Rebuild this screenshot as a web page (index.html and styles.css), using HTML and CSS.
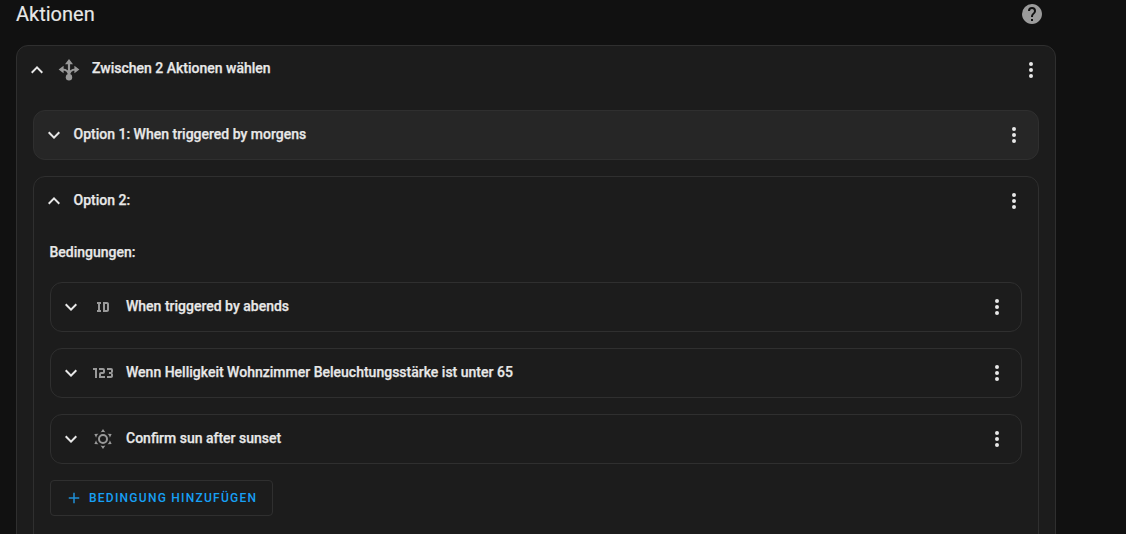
FILE: index.html
```html
<!DOCTYPE html>
<html lang="de">
<head>
<meta charset="utf-8">
<title>Aktionen</title>
<link rel="stylesheet" href="styles.css">
</head>
<body>
<main class="page">
  <header class="title-row">
    <h1 class="title">Aktionen</h1>
    <svg class="icon help" viewBox="0 0 24 24"><path d="M15.07,11.25L14.17,12.17C13.45,12.89 13,13.5 13,15H11V14.5C11,13.39 11.45,12.39 12.17,11.67L13.41,10.41C13.78,10.05 14,9.55 14,9C14,7.89 13.1,7 12,7A2,2 0 0,0 10,9H8A4,4 0 0,1 12,5A4,4 0 0,1 16,9C16,9.88 15.64,10.67 15.07,11.25M13,19H11V17H13M12,2A10,10 0 0,0 2,12C2,17.5 6.47,22 12,22C17.5,22 22,17.5 22,12C22,6.47 17.5,2 12,2Z"/></svg>
  </header>

  <section class="card">
    <div class="row">
      <svg class="icon chev" viewBox="0 0 24 24"><path d="M7.41,15.41L12,10.83L16.59,15.41L18,14L12,8L6,14L7.41,15.41Z"/></svg>
      <svg class="icon type choose" viewBox="0 0 24 24"><path class="choose-lines" d="M12 19V5M12 18C12 14 9.5 11.5 5 11.5M12 18C12 14 14.5 11.5 19 11.5"/><path d="M12 1L16 6.2H8ZM1.6 11.5L6.6 7.8V15.2ZM22.4 11.5L17.4 7.8V15.2Z"/><circle cx="12" cy="19.2" r="3.2"/></svg>
      <span class="label label-top">Zwischen 2 Aktionen wählen</span>
      <svg class="icon dots" viewBox="0 0 24 24"><path d="M12,16A2,2 0 0,1 14,18A2,2 0 0,1 12,20A2,2 0 0,1 10,18A2,2 0 0,1 12,16M12,10A2,2 0 0,1 14,12A2,2 0 0,1 12,14A2,2 0 0,1 10,12A2,2 0 0,1 12,10M12,4A2,2 0 0,1 14,6A2,2 0 0,1 12,8A2,2 0 0,1 10,6A2,2 0 0,1 12,4Z"/></svg>
    </div>

    <div class="card-body">
      <div class="card collapsed-option">
        <div class="row">
          <svg class="icon chev chev-plain" viewBox="0 0 24 24"><path d="M7.41,8.58L12,13.17L16.59,8.58L18,10L12,16L6,10L7.41,8.58Z"/></svg>
          <span class="label">Option 1: When triggered by morgens</span>
          <svg class="icon dots" viewBox="0 0 24 24"><path d="M12,16A2,2 0 0,1 14,18A2,2 0 0,1 12,20A2,2 0 0,1 10,18A2,2 0 0,1 12,16M12,10A2,2 0 0,1 14,12A2,2 0 0,1 12,14A2,2 0 0,1 10,12A2,2 0 0,1 12,10M12,4A2,2 0 0,1 14,6A2,2 0 0,1 12,8A2,2 0 0,1 10,6A2,2 0 0,1 12,4Z"/></svg>
        </div>
      </div>

      <div class="card">
        <div class="row">
          <svg class="icon chev chev-plain" viewBox="0 0 24 24"><path d="M7.41,15.41L12,10.83L16.59,15.41L18,14L12,8L6,14L7.41,15.41Z"/></svg>
          <span class="label">Option 2:</span>
          <svg class="icon dots" viewBox="0 0 24 24"><path d="M12,16A2,2 0 0,1 14,18A2,2 0 0,1 12,20A2,2 0 0,1 10,18A2,2 0 0,1 12,16M12,10A2,2 0 0,1 14,12A2,2 0 0,1 12,14A2,2 0 0,1 10,12A2,2 0 0,1 12,10M12,4A2,2 0 0,1 14,6A2,2 0 0,1 12,8A2,2 0 0,1 10,6A2,2 0 0,1 12,4Z"/></svg>
        </div>
        <div class="option-body">
          <h2 class="section-title">Bedingungen:</h2>

          <div class="card">
            <div class="row">
              <svg class="icon chev" viewBox="0 0 24 24"><path d="M7.41,8.58L12,13.17L16.59,8.58L18,10L12,16L6,10L7.41,8.58Z"/></svg>
              <svg class="icon type" viewBox="0 0 24 24"><path d="M10 7V9H9V15H10V17H6V15H7V9H6V7H10M16 7C17.11 7 18 7.9 18 9V15C18 16.11 17.11 17 16 17H12V7M16 9H14V15H16V9Z"/></svg>
              <span class="label">When triggered by abends</span>
              <svg class="icon dots" viewBox="0 0 24 24"><path d="M12,16A2,2 0 0,1 14,18A2,2 0 0,1 12,20A2,2 0 0,1 10,18A2,2 0 0,1 12,16M12,10A2,2 0 0,1 14,12A2,2 0 0,1 12,14A2,2 0 0,1 10,12A2,2 0 0,1 12,10M12,4A2,2 0 0,1 14,6A2,2 0 0,1 12,8A2,2 0 0,1 10,6A2,2 0 0,1 12,4Z"/></svg>
            </div>
          </div>

          <div class="card">
            <div class="row">
              <svg class="icon chev" viewBox="0 0 24 24"><path d="M7.41,8.58L12,13.17L16.59,8.58L18,10L12,16L6,10L7.41,8.58Z"/></svg>
              <svg class="icon type" viewBox="0 0 24 24"><path d="M4,17V9H2V7H6V17H4M22,15C22,16.11 21.1,17 20,17H16V15H20V13H18V11H20V9H16V7H20A2,2 0 0,1 22,9V10.5A1.5,1.5 0 0,1 20.5,12A1.5,1.5 0 0,1 22,13.5V15M14,15V17H8V13C8,11.89 8.9,11 10,11H12V9H8V7H12A2,2 0 0,1 14,9V11C14,12.11 13.1,13 12,13H10V15H14Z"/></svg>
              <span class="label">Wenn Helligkeit Wohnzimmer Beleuchtungsstärke ist unter 65</span>
              <svg class="icon dots" viewBox="0 0 24 24"><path d="M12,16A2,2 0 0,1 14,18A2,2 0 0,1 12,20A2,2 0 0,1 10,18A2,2 0 0,1 12,16M12,10A2,2 0 0,1 14,12A2,2 0 0,1 12,14A2,2 0 0,1 10,12A2,2 0 0,1 12,10M12,4A2,2 0 0,1 14,6A2,2 0 0,1 12,8A2,2 0 0,1 10,6A2,2 0 0,1 12,4Z"/></svg>
            </div>
          </div>

          <div class="card">
            <div class="row">
              <svg class="icon chev" viewBox="0 0 24 24"><path d="M7.41,8.58L12,13.17L16.59,8.58L18,10L12,16L6,10L7.41,8.58Z"/></svg>
              <svg class="icon type" viewBox="0 0 24 24"><path d="M12,7A5,5 0 0,1 17,12A5,5 0 0,1 12,17A5,5 0 0,1 7,12A5,5 0 0,1 12,7M12,9A3,3 0 0,0 9,12A3,3 0 0,0 12,15A3,3 0 0,0 15,12A3,3 0 0,0 12,9M12,2L14.39,5.42C13.65,5.15 12.84,5 12,5C11.16,5 10.35,5.15 9.61,5.42L12,2M3.34,7L7.5,6.65C6.9,7.16 6.36,7.78 5.94,8.5C5.5,9.24 5.25,10 5.11,10.79L3.34,7M3.36,17L5.12,13.23C5.26,14 5.53,14.78 5.95,15.5C6.37,16.24 6.91,16.86 7.5,17.37L3.36,17M20.65,7L18.88,10.79C18.74,10 18.47,9.23 18.05,8.5C17.63,7.78 17.1,7.15 16.5,6.64L20.65,7M20.64,17L16.5,17.36C17.09,16.85 17.62,16.22 18.04,15.5C18.46,14.77 18.73,14 18.87,13.21L20.64,17M12,22L9.59,18.56C10.33,18.83 11.14,19 12,19C12.82,19 13.63,18.83 14.37,18.56L12,22Z"/></svg>
              <span class="label">Confirm sun after sunset</span>
              <svg class="icon dots" viewBox="0 0 24 24"><path d="M12,16A2,2 0 0,1 14,18A2,2 0 0,1 12,20A2,2 0 0,1 10,18A2,2 0 0,1 12,16M12,10A2,2 0 0,1 14,12A2,2 0 0,1 12,14A2,2 0 0,1 10,12A2,2 0 0,1 12,10M12,4A2,2 0 0,1 14,6A2,2 0 0,1 12,8A2,2 0 0,1 10,6A2,2 0 0,1 12,4Z"/></svg>
            </div>
          </div>

          <button class="add-button" type="button">
            <svg class="plus" viewBox="0 0 24 24"><path d="M19,13H13V19H11V13H5V11H11V5H13V11H19V13Z"/></svg>
            <span>Bedingung hinzufügen</span>
          </button>
        </div>
      </div>
    </div>
  </section>
</main>
</body>
</html>
```

FILE: styles.css
```css
* {
  box-sizing: border-box;
}

html,
body {
  height: 100%;
  margin: 0;
  overflow: hidden;
  background: #111111;
}

body {
  font-family: Roboto, "Liberation Sans", sans-serif;
  color: #e8e8e8;
}

.page {
  width: 1072px;
  padding: 0 16px;
}

.title-row {
  display: flex;
  align-items: center;
  justify-content: space-between;
  height: 28px;
  margin-bottom: 17px;
  padding-right: 12px;
}

.title {
  margin: 0;
  font-size: 20px;
  font-weight: 400;
  line-height: 28px;
  -webkit-text-stroke: 0.15px currentColor;
}

.icon {
  flex: none;
  width: 24px;
  height: 24px;
  fill: currentColor;
}

.help {
  color: #9b9b9b;
}

.card {
  border: 1px solid #2f2f2f;
  border-radius: 12px;
  background: #1c1c1c;
}

.collapsed-option {
  background: #262626;
}

.row {
  display: flex;
  align-items: center;
  height: 48px;
  padding: 0 12px 0 8px;
}

.chev {
  margin-right: 8px;
}

.chev-plain {
  margin-right: 7.5px;
}

.type {
  margin-right: 11px;
  color: #999999;
}

.choose {
  margin-top: -1px;
}

.choose-lines {
  fill: none;
  stroke: currentColor;
  stroke-width: 2.2;
}

.label {
  flex: 1;
  font-size: 14px;
  font-weight: 500;
  line-height: 20px;
  margin-top: -2px;
  -webkit-text-stroke: 0.25px currentColor;
}

.label-top {
  margin-top: -4px;
}

.card-body {
  display: flex;
  flex-direction: column;
  gap: 16px;
  padding: 16px 16px 60px;
}

.option-body {
  display: flex;
  flex-direction: column;
  align-items: stretch;
  gap: 16px;
  padding: 15px 16px 60px;
}

.section-title {
  margin: 0 0 2px -0.5px;
  font-size: 14px;
  font-weight: 500;
  line-height: 24px;
  -webkit-text-stroke: 0.25px currentColor;
}

.add-button {
  display: flex;
  align-items: center;
  gap: 6px;
  align-self: flex-start;
  width: 223px;
  height: 36px;
  padding: 0 0 0 14px;
  border: 1px solid #2f2f2f;
  border-radius: 4px;
  background: transparent;
  color: #17a0f5;
  font-family: inherit;
  font-size: 12px;
  font-weight: 500;
  letter-spacing: 1.25px;
  text-transform: uppercase;
}

.plus {
  flex: none;
  width: 18px;
  height: 18px;
  fill: #1f8fd6;
}
```
